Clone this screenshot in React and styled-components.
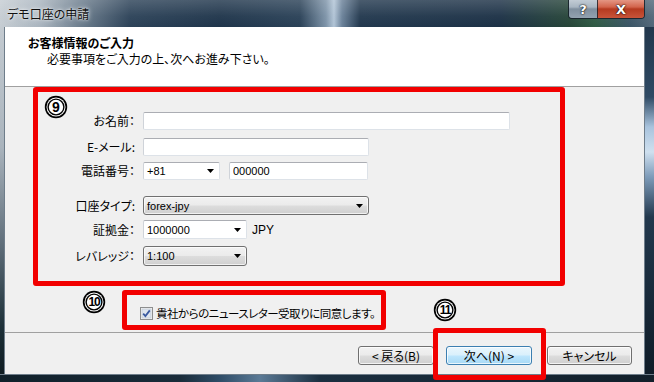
import React from "react";
import styled, { createGlobalStyle } from "styled-components";

const GlobalStyle = createGlobalStyle`
  *, *::before, *::after { box-sizing: border-box; }
  html, body { margin: 0; padding: 0; background: #16222e; }
  body {
    font-family: "Noto Sans CJK JP", sans-serif;
    font-size: 12px;
    color: #000;
    font-feature-settings: "palt";
  }
`;

const RED = "#f20000";

const Window = styled.div`
  width: 654px;
  height: 382px;
  display: flex;
  flex-direction: column;
  overflow: hidden;
`;

const TitleBar = styled.div`
  height: 27px;
  flex-shrink: 0;
  display: flex;
  align-items: flex-start;
  background:
    linear-gradient(180deg, rgba(255, 255, 255, 0.18) 0, rgba(255, 255, 255, 0.04) 60%, rgba(0, 0, 0, 0) 100%),
    linear-gradient(90deg, #c6cdd3 0, #aab5bf 40px, #6d7e8e 80px, #2c4258 130px, #1f354b 220px,
      #2a4157 300px, #7d93a8 326px, #b1c4d6 334px, #6a8199 342px, #22384e 360px, #1c3146 500px,
      #264538 570px, #2f5a44 595px, #3b5566 630px, #53687a 654px);
`;

const Title = styled.div`
  margin: 6px 0 0 7px;
  font-size: 12px;
  line-height: 16px;
  color: #111;
  text-shadow: 0 0 5px rgba(255, 255, 255, 0.9), 0 0 2px rgba(255, 255, 255, 0.8);
  flex: 1;
`;

const CaptionButtons = styled.div`
  display: flex;
  margin-right: 9px;
  margin-top: -2px;
  border: 1px solid rgba(20, 30, 40, 0.85);
  border-top: none;
  border-radius: 0 0 4px 4px;
  overflow: hidden;
`;

const CaptionButton = styled.div`
  width: ${({ $w }) => $w}px;
  height: 20px;
  display: flex;
  align-items: center;
  justify-content: center;
  padding-top: 2px;
  font-family: "DejaVu Sans", sans-serif;
  font-weight: bold;
  font-size: 13px;
  color: #fff;
  text-shadow: 0 0 2px #000, 0 0 1px #000;
  background: ${({ $close }) =>
    $close
      ? "linear-gradient(180deg, #e9a493 0, #d2644c 45%, #b53a20 55%, #c8543a 100%)"
      : "linear-gradient(180deg, #c9d2da 0, #a9b6c2 45%, #7f8f9e 55%, #93a2b0 100%)"};
  & + & {
    border-left: 1px solid rgba(20, 30, 40, 0.8);
  }
`;

const Middle = styled.div`
  flex: 1;
  display: flex;
`;

const SideEdge = styled.div`
  width: ${({ $w }) => $w}px;
  flex-shrink: 0;
  background: ${({ $right }) =>
    $right
      ? "linear-gradient(180deg, #22374c 0, #2f4a64 70px, #a8c3dd 100px, #cfe0ef 125px, #7d9bb9 150px, #22384d 190px, #0f1c28 347px)"
      : "linear-gradient(180deg, #c4cbd1 0, #aab4bd 120px, #5d6c78 220px, #1d3038 300px, #0f1c22 347px)"};
  border-${({ $right }) => ($right ? "left" : "right")}: 1px solid #6e7d8a;
`;

const Client = styled.div`
  flex: 1;
  display: flex;
  flex-direction: column;
  background: #f0f0f0;
`;

const BottomEdge = styled.div`
  height: 8px;
  flex-shrink: 0;
  background: linear-gradient(90deg, #10202a 0, #1a2c3a 180px, #2f4d68 220px, #5b7a96 260px, #1b2f40 320px, #121f2a 654px);
  border-top: 1px solid #6e7d8a;
`;

const Header = styled.div`
  height: 60px;
  flex-shrink: 0;
  background: #fff;
  border-bottom: 1px solid #a0a0a0;
  padding: 8px 0 0 23px;
`;

const Heading = styled.div`
  font-weight: bold;
  line-height: 16px;
`;

const SubHeading = styled.div`
  line-height: 16px;
  margin-left: 19px;
`;

const Content = styled.div`
  height: 245px;
  flex-shrink: 0;
  padding-left: 28px;
`;

const Annotation = styled.div`
  position: relative;
  border: 5px solid ${RED};
  border-radius: 3px;
`;

const FormBox = styled(Annotation)`
  width: 532px;
  height: 199px;
  padding: 20px 0 0 0;
`;

const BadgeSlot = styled.div`
  position: absolute;
  left: ${({ $x }) => $x}px;
  top: ${({ $y }) => $y}px;
`;

const Row = styled.div`
  display: grid;
  grid-template-columns: 97px auto;
  column-gap: 8px;
  align-items: center;
  margin-top: ${({ $mt }) => $mt || 0}px;
`;

const Label = styled.div`
  text-align: right;
  line-height: 16px;
  white-space: nowrap;
`;

const Fields = styled.div`
  display: flex;
  align-items: center;
  gap: ${({ $gap }) => $gap || 0}px;
`;

const TextBox = styled.input`
  width: ${({ $w }) => $w}px;
  height: ${({ $h }) => $h || 18}px;
  margin: 0;
  padding: 0 3px;
  background: #fff;
  border: 1px solid #dde2e8;
  border-top-color: #abadb3;
  border-left-color: #cfd3d9;
  border-radius: 2px;
  font-family: "Liberation Sans", sans-serif;
  font-size: 11px;
  color: #000;
  outline: none;
`;

const Combo = styled.div`
  width: ${({ $w }) => $w}px;
  height: ${({ $h }) => $h || 18}px;
  display: flex;
  align-items: center;
  justify-content: space-between;
  padding: 0 5px 0 3px;
  font-family: "Liberation Sans", sans-serif;
  font-size: 11px;
  border-radius: 2px;
  ${({ $list }) =>
    $list
      ? `
    border: 1px solid #707070;
    border-radius: 3px;
    background: linear-gradient(180deg, #f2f2f2 0, #ebebeb 48%, #dddddd 52%, #cfcfcf 100%);
    box-shadow: inset 0 0 0 1px rgba(255, 255, 255, 0.7);
  `
      : `
    background: #fff;
    border: 1px solid #dde2e8;
    border-top-color: #abadb3;
    border-left-color: #cfd3d9;
  `}
`;

const Unit = styled.span`
  margin-left: 5px;
  font-family: "Liberation Sans", sans-serif;
  font-size: 12px;
`;

const ConsentRow = styled.div`
  display: flex;
  align-items: flex-start;
  margin-top: 4px;
  padding-left: 49px;
`;

const ConsentBox = styled(Annotation)`
  width: 264px;
  height: 40px;
  margin-left: 16px;
  padding: 10px 0 0 13px;
`;

const ConsentInner = styled.div`
  display: flex;
  align-items: center;
  gap: 3px;
  line-height: 16px;
  white-space: nowrap;
  font-size: 11.5px;
  letter-spacing: -0.5px;
  & > svg { flex-shrink: 0; }
`;

const Footer = styled.div`
  flex: 1;
  border-top: 1px solid #a0a0a0;
  display: flex;
  justify-content: flex-end;
  align-items: flex-start;
  padding: 13px 12px 0 0;
`;

const Button = styled.div`
  position: relative;
  width: ${({ $w }) => $w}px;
  height: 19px;
  margin-left: ${({ $ml }) => $ml || 0}px;
  display: flex;
  align-items: center;
  justify-content: center;
  border: 1px solid ${({ $default }) => ($default ? "#3c7fb1" : "#707070")};
  border-radius: 3px;
  background: ${({ $default }) =>
    $default
      ? "linear-gradient(180deg, #eaf6fd 0, #d9f0fc 48%, #bee6fd 52%, #a7d9f5 100%)"
      : "linear-gradient(180deg, #f2f2f2 0, #ebebeb 48%, #dddddd 52%, #cfcfcf 100%)"};
  box-shadow: inset 0 0 0 1px rgba(255, 255, 255, 0.75);
  font-size: 12px;
  line-height: 16px;
`;

const Overlay = styled.div`
  position: absolute;
  left: -14px;
  top: -19px;
  width: 113px;
  height: 52px;
  border: 5px solid ${RED};
  border-radius: 3px;
`;

const CircleBadge = ({ n }) => (
  <svg width="24" height="24" viewBox="0 0 24 24">
    <circle cx="12" cy="12" r="11.2" fill="#000" />
    <circle cx="12" cy="12" r="9.5" fill="#fff" />
    <circle cx="12" cy="12" r="8.6" fill="#000" />
    <circle cx="12" cy="12" r="7.2" fill="#fff" />
    <text
      x="12"
      y={n > 9 ? 16.2 : 17}
      textAnchor="middle"
      fontFamily="Liberation Sans, sans-serif"
      fontWeight="bold"
      fontSize={n > 9 ? 12 : 14}
      letterSpacing={n > 9 ? -1.2 : 0}
      fill="#000"
    >
      {n}
    </text>
  </svg>
);

const Arrow = () => (
  <svg width="7" height="4" viewBox="0 0 7 4">
    <path d="M0 0h7L3.5 4z" fill="#000" />
  </svg>
);

const CheckBox = () => (
  <svg width="13" height="13" viewBox="0 0 13 13">
    <rect x="0.5" y="0.5" width="12" height="12" fill="#f4f4f4" stroke="#8e8f8f" />
    <rect x="2" y="2" width="9" height="9" fill="#dfe6ee" stroke="#b9c3cf" strokeWidth="0.6" />
    <path d="M3.2 6.6l2.2 2.4L9.8 3.4" fill="none" stroke="#3a5aa0" strokeWidth="1.8" />
  </svg>
);

export default function App() {
  return (
    <>
      <GlobalStyle />
      <Window>
        <TitleBar>
          <Title>デモ口座の申請</Title>
          <CaptionButtons>
            <CaptionButton $w={28}>?</CaptionButton>
            <CaptionButton $w={47} $close>
              X
            </CaptionButton>
          </CaptionButtons>
        </TitleBar>
        <Middle>
          <SideEdge $w={5} />
          <Client>
            <Header>
              <Heading>お客様情報のご入力</Heading>
              <SubHeading>必要事項をご入力の上、次へお進み下さい。</SubHeading>
            </Header>
            <Content>
              <FormBox>
                <BadgeSlot $x={6} $y={3}>
                  <CircleBadge n={9} />
                </BadgeSlot>
                <Row>
                  <Label>お名前：</Label>
                  <TextBox $w={367} defaultValue="" />
                </Row>
                <Row $mt={8}>
                  <Label>E-メール:</Label>
                  <TextBox $w={226} defaultValue="" />
                </Row>
                <Row $mt={6}>
                  <Label>電話番号：</Label>
                  <Fields $gap={9}>
                    <Combo $w={77}>
                      <span>+81</span>
                      <Arrow />
                    </Combo>
                    <TextBox $w={139} defaultValue="000000" />
                  </Fields>
                </Row>
                <Row $mt={16}>
                  <Label>口座タイプ:</Label>
                  <Combo $w={226} $h={19} $list>
                    <span>forex-jpy</span>
                    <Arrow />
                  </Combo>
                </Row>
                <Row $mt={5}>
                  <Label>証拠金：</Label>
                  <Fields>
                    <Combo $w={104} $h={19}>
                      <span>1000000</span>
                      <Arrow />
                    </Combo>
                    <Unit>JPY</Unit>
                  </Fields>
                </Row>
                <Row $mt={7}>
                  <Label>レバレッジ：</Label>
                  <Combo $w={104} $h={20} $list>
                    <span>1:100</span>
                    <Arrow />
                  </Combo>
                </Row>
              </FormBox>
              <ConsentRow>
                <CircleBadge n={10} />
                <ConsentBox>
                  <ConsentInner>
                    <CheckBox />
                    <span>貴社からのニュースレター受取りに同意します。</span>
                  </ConsentInner>
                </ConsentBox>
              </ConsentRow>
            </Content>
            <Footer>
              <Button $w={76}>&lt; 戻る(B)</Button>
              <Button $w={86} $ml={12} $default>
                <BadgeSlot $x={-14} $y={-49}>
                  <CircleBadge n={11} />
                </BadgeSlot>
                次へ(N) &gt;
                <Overlay />
              </Button>
              <Button $w={85} $ml={15}>
                キャンセル
              </Button>
            </Footer>
          </Client>
          <SideEdge $w={10} $right />
        </Middle>
        <BottomEdge />
      </Window>
    </>
  );
}
